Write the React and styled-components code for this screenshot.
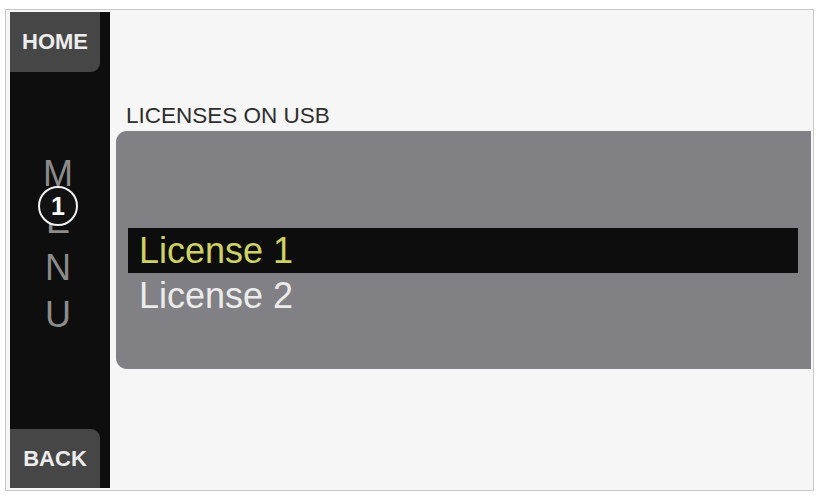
import React from "react";
import styled, { createGlobalStyle } from "styled-components";

const Global = createGlobalStyle`
  html, body { margin: 0; padding: 0; background: #ffffff; }
  body { font-family: "Liberation Sans", Arial, sans-serif; }
`;

const Frame = styled.div`
  box-sizing: border-box;
  margin: 9px 0 0 5px;
  width: 809px;
  height: 482px;
  border: 1px solid #c9c9c9;
  padding: 2px 2px 2px 4px;
  background: #f6f6f6;
  display: flex;
`;

const Sidebar = styled.nav`
  width: 100px;
  flex: 0 0 100px;
  background: #0e0e0e;
  display: flex;
  flex-direction: column;
  justify-content: space-between;
  position: relative;
`;

const NavButton = styled.div`
  width: 90px;
  height: ${(p) => p.$h}px;
  background: #464646;
  color: #ededed;
  font-weight: 700;
  font-size: 22px;
  display: flex;
  align-items: center;
  justify-content: center;
  border-radius: ${(p) => (p.$top ? "0 0 9px 0" : "0 9px 0 0")};
`;

const MenuStack = styled.div`
  position: relative;
  flex: 1;
  display: flex;
  flex-direction: column;
  align-items: center;
  padding-top: 78px;
  padding-right: 4px;
`;

const MenuLetter = styled.span`
  display: block;
  font-size: 36px;
  line-height: 47px;
  height: 47px;
  color: #8c8c8c;
  font-weight: 400;
`;

const Badge = styled.div`
  position: absolute;
  left: 28px;
  top: 114px;
  box-sizing: border-box;
  width: 40px;
  height: 40px;
  border-radius: 50%;
  border: 2px solid #f2f2f2;
  background: #121212;
  color: #ffffff;
  font-weight: 700;
  font-size: 25px;
  display: flex;
  align-items: center;
  justify-content: center;
`;

const Main = styled.main`
  flex: 1;
  display: flex;
  flex-direction: column;
  padding: 93px 0 0 6px;
`;

const Title = styled.h2`
  margin: 0 0 4px 10px;
  font-size: 22.5px;
  line-height: 22px;
  font-weight: 400;
  color: #2e2e2e;
`;

const Panel = styled.div`
  box-sizing: border-box;
  height: 238px;
  background: #818084;
  border-radius: 11px 0 0 11px;
  padding: 97px 13px 0 12px;
  display: flex;
  flex-direction: column;
`;

const Row = styled.div`
  height: 45px;
  line-height: 45px;
  font-size: 36px;
  padding-left: 11px;
  background: ${(p) => (p.$selected ? "#0d0d0d" : "transparent")};
  color: ${(p) => (p.$selected ? "#cdd262" : "#ececec")};
`;

export default function App() {
  const licenses = ["License 1", "License 2"];
  return (
    <>
      <Global />
      <Frame>
        <Sidebar>
          <NavButton $top $h={60}>HOME</NavButton>
          <MenuStack>
            {["M", "E", "N", "U"].map((l) => (
              <MenuLetter key={l}>{l}</MenuLetter>
            ))}
            <Badge>1</Badge>
          </MenuStack>
          <NavButton $h={59}>BACK</NavButton>
        </Sidebar>
        <Main>
          <Title>LICENSES ON USB</Title>
          <Panel>
            {licenses.map((l, i) => (
              <Row key={l} $selected={i === 0}>
                {l}
              </Row>
            ))}
          </Panel>
        </Main>
      </Frame>
    </>
  );
}
